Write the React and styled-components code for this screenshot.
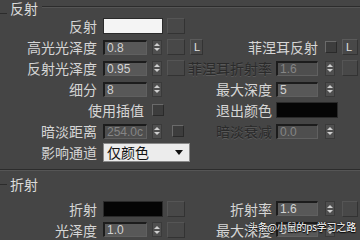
import React from 'react';
import styled, { createGlobalStyle } from 'styled-components';

const GlobalStyle = createGlobalStyle`
  html, body {
    margin: 0;
    padding: 0;
    background: #454545;
  }
  body {
    width: 360px;
    height: 240px;
    overflow: hidden;
    font-family: "Noto Sans CJK SC", "Noto Sans", sans-serif;
  }
`;

const Panel = styled.div`
  position: relative;
  width: 360px;
  height: 240px;
  background: #454545;
  color: #d6d6d6;
  overflow: hidden;
  display: flex;
  flex-direction: column;
`;

const Rule = styled.div`
  height: 1px;
  background: #2c2c2c;
  border-bottom: 1px solid #555;
  margin-top: ${props => props.top}px;
`;

const GroupHead = styled.div`
  display: flex;
  align-items: center;
  height: ${props => props.h}px;
  padding-top: ${props => props.pt || 0}px;
  box-sizing: border-box;
  font-size: 14px;
  line-height: 14px;
  color: #dcdcdc;

  &::before {
    content: '';
    width: 7px;
    height: 1px;
    margin-right: 3px;
    align-self: ${props => (props.low ? 'flex-end' : 'center')};
    margin-bottom: ${props => (props.low ? 2 : 0)}px;
    background: #2c2c2c;
  }
`;

const HeadLine = styled.div`
  flex: 1;
  height: 1px;
  align-self: flex-start;
  margin: 5px 0 0 4px;
  background: #2c2c2c;
  border-bottom: 1px solid #555;
`;

const Grid = styled.div`
  display: grid;
  grid-template-columns: 100px 50px 15px 23px 18px 68px 48px 18px 20px;
  grid-auto-rows: 21px;
  align-items: center;
  margin-top: ${props => props.top || 0}px;
`;

const Label = styled.div`
  grid-column: ${props => props.col || '1'};
  text-align: right;
  padding-right: ${props => props.pr ?? 3}px;
  font-size: 14px;
  line-height: 16px;
  white-space: nowrap;
  color: ${props => (props.dim ? '#2a2a2a' : '#d6d6d6')};
  text-shadow: ${props => (props.dim ? '0 1px 0 #5a5a5a' : 'none')};
`;

const Swatch = styled.div`
  grid-column: ${props => props.col};
  margin-left: ${props => props.ml}px;
  width: ${props => props.w}px;
  height: 16px;
  box-sizing: border-box;
  background: ${props => props.color};
  border: 1px solid #2a2a2a;
`;

const Field = styled.div`
  grid-column: ${props => props.col};
  margin-left: ${props => props.ml ?? 3}px;
  width: ${props => props.w || 44}px;
  height: 15px;
  box-sizing: border-box;
  background: ${props => (props.dim ? '#4e4e4e' : '#585858')};
  border-top: 2px solid #1c1c1c;
  border-left: 2px solid #1c1c1c;
  border-right: 1px solid #606060;
  border-bottom: 1px solid #606060;
  padding-left: 2px;
  font-family: "Liberation Sans", Arial, sans-serif;
  font-size: 12px;
  line-height: 12px;
  color: ${props => (props.dim ? '#858585' : '#d2d2d2')};
  overflow: hidden;
  white-space: nowrap;
`;

const Spinner = styled.div`
  grid-column: ${props => props.col};
  margin-left: ${props => props.ml ?? 2}px;
  width: 10px;
  height: 15px;
  box-sizing: border-box;
  background: #4f4f4f;
  border: 1px solid #3a3a3a;
  display: flex;
  flex-direction: column;
  align-items: center;
  justify-content: center;
  gap: 2px;

  &::before,
  &::after {
    content: '';
    width: 0;
    height: 0;
    border-left: 3px solid transparent;
    border-right: 3px solid transparent;
  }
  &::before {
    border-bottom: 3px solid #cfcfcf;
  }
  &::after {
    border-top: 3px solid #cfcfcf;
  }
`;

const MapButton = styled.div`
  grid-column: ${props => props.col};
  margin-left: ${props => props.ml ?? 2}px;
  width: ${props => props.w || 18}px;
  height: 16px;
  box-sizing: border-box;
  background: #484848;
  border: 1px solid #333;
  border-top-color: #555;
  border-left-color: #555;
`;

const LockButton = styled.div`
  grid-column: ${props => props.col};
  margin-left: ${props => props.ml ?? 2}px;
  width: ${props => props.w || 13}px;
  height: 16px;
  box-sizing: border-box;
  background: #484848;
  border: 1px solid #333;
  border-top-color: #5a5a5a;
  border-left-color: #5a5a5a;
  font-family: "Liberation Sans", Arial, sans-serif;
  font-size: 11px;
  line-height: 14px;
  padding-left: 3px;
  color: #e0e0e0;
`;

const Check = styled.div`
  grid-column: ${props => props.col};
  margin-left: ${props => props.ml ?? 2}px;
  width: 12px;
  height: 12px;
  box-sizing: border-box;
  background: #3d3d3d;
  border: 1px solid #6a6a6a;
  border-right-color: #2a2a2a;
  border-bottom-color: #2a2a2a;
`;

const Dropdown = styled.div`
  grid-column: ${props => props.col};
  margin-left: 3px;
  width: 87px;
  height: 19px;
  box-sizing: border-box;
  background: #ececec;
  border: 1px solid #8a8a8a;
  display: flex;
  align-items: center;
  justify-content: space-between;
  padding: 0 6px 0 3px;
  font-size: 14px;
  color: #111;

  &::after {
    content: '';
    border-left: 4px solid transparent;
    border-right: 4px solid transparent;
    border-top: 5px solid #111;
  }
`;

const Watermark = styled.div`
  position: absolute;
  left: 248px;
  top: 221px;
  font-size: 10px;
  line-height: 12px;
  letter-spacing: -0.2px;
  color: #ffffff;
  text-shadow: 0 0 2px #000, 0 1px 1px #000;
  white-space: nowrap;
`;

export default function App() {
  return (
    <Panel>
      <GlobalStyle />
      <GroupHead h={17} pt={1} low>
        反射
        <HeadLine />
      </GroupHead>
      <Grid>
        <Label>反射</Label>
        <Swatch col="2 / 4" ml={3} w={60} color="#f4f4f4" />
        <MapButton col="4" />

        <Label>高光光泽度</Label>
        <Field col="2">0.8</Field>
        <Spinner col="3" />
        <MapButton col="4" />
        <LockButton col="5">L</LockButton>
        <Label col="6 / 8" pr={4}>菲涅耳反射</Label>
        <Check col="8" ml={3} />
        <LockButton col="9" w={16}>L</LockButton>

        <Label>反射光泽度</Label>
        <Field col="2">0.95</Field>
        <Spinner col="3" />
        <MapButton col="4" />
        <Label col="5 / 7" pr={2} dim>菲涅耳折射率</Label>
        <Field col="7" ml={2} w={42} dim>1.6</Field>
        <Spinner col="8" ml={3} />
        <MapButton col="9" w={16} />

        <Label>细分</Label>
        <Field col="2">8</Field>
        <Spinner col="3" />
        <Label col="5 / 7" pr={2}>最大深度</Label>
        <Field col="7" ml={2} w={42}>5</Field>
        <Spinner col="8" ml={3} />

        <Label col="1 / 3" pr={6}>使用插值</Label>
        <Check col="3" />
        <Label col="5 / 7" pr={2}>退出颜色</Label>
        <Swatch col="7 / 10" ml={2} w={62} color="#050505" />

        <Label>暗淡距离</Label>
        <Field col="2" dim>254.0c</Field>
        <Spinner col="3" />
        <Check col="4" ml={7} />
        <Label col="5 / 7" pr={2} dim>暗淡衰减</Label>
        <Field col="7" ml={2} w={42} dim>0.0</Field>
        <Spinner col="8" ml={3} />

        <Label>影响通道</Label>
        <Dropdown col="2 / 6">仅颜色</Dropdown>
      </Grid>

      <Rule top={6} />
      <GroupHead h={30}>折射</GroupHead>
      <Grid>
        <Label>折射</Label>
        <Swatch col="2 / 4" ml={3} w={60} color="#050505" />
        <MapButton col="4" />
        <Label col="5 / 7" pr={2}>折射率</Label>
        <Field col="7" ml={2} w={42}>1.6</Field>
        <Spinner col="8" ml={3} />
        <MapButton col="9" w={16} />

        <Label>光泽度</Label>
        <Field col="2">1.0</Field>
        <Spinner col="3" />
        <MapButton col="4" />
        <Label col="5 / 7" pr={2}>最大深度</Label>
        <Field col="7" ml={2} w={42}>5</Field>
        <Spinner col="8" ml={3} />
      </Grid>

      <Watermark>头条@小鼠的ps学习之路</Watermark>
    </Panel>
  );
}
